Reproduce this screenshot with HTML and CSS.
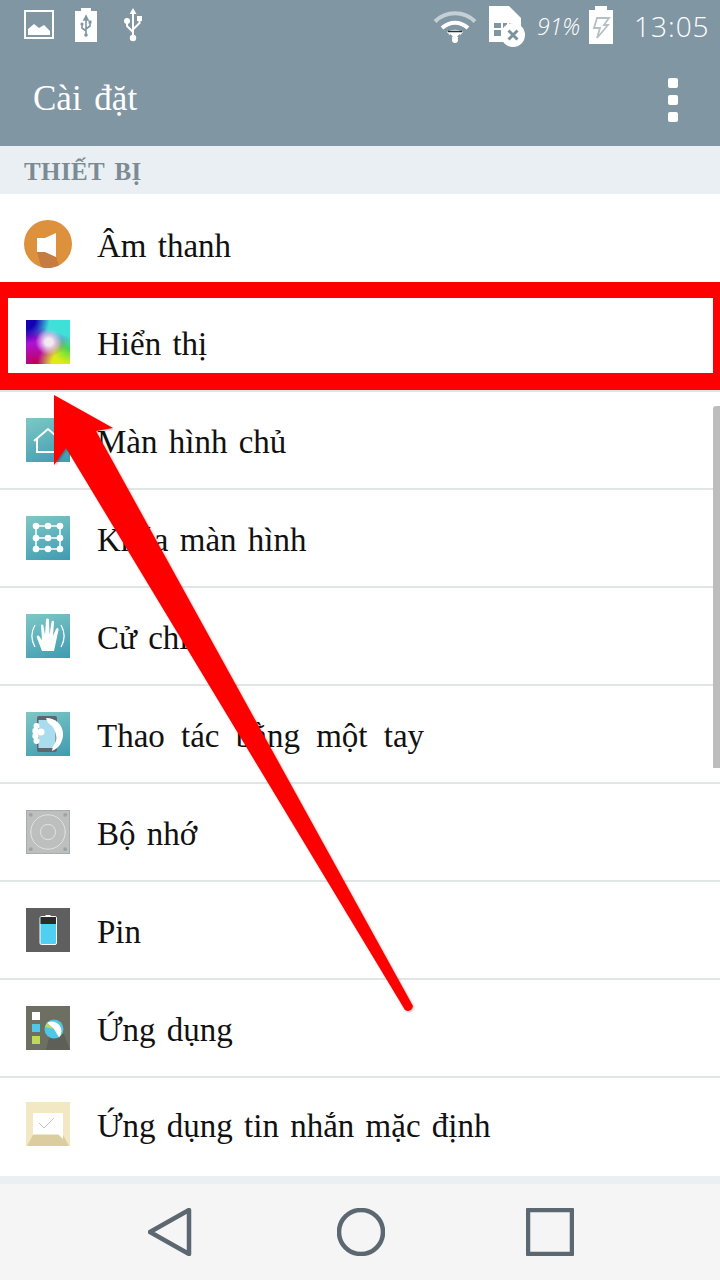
FILE: index.html
```html
<!DOCTYPE html>
<html lang="vi">
<head>
    <meta charset="UTF-8">
    <meta name="viewport" content="width=device-width, initial-scale=1.0">
    <title>Cài đặt</title>
    <link rel="stylesheet" href="styles.css">
</head>
<body>
    <div id="phone">
        <header class="top">
            <div class="status-bar">
                <svg class="st-image" viewBox="0 0 30 30"><rect x="1" y="1" width="28" height="27" fill="none" stroke="#fff" stroke-width="2"/><path d="M4 25v-6l6-5 5 4 5-3 6 6v4z" fill="#fff"/></svg>
                <svg class="st-batt-usb" viewBox="0 0 22 34"><path d="M6 0h10v3h6v31H0V3h6z" fill="#fff"/><path d="M11 10v17M11 8l-2 4h4zM11 23l-4-3v-3M11 21l4-3v-3" fill="none" stroke="#8196a3" stroke-width="1.6"/><circle cx="7" cy="16" r="1.6" fill="#8196a3"/><rect x="13.5" y="12.5" width="3" height="3" fill="#8196a3"/><circle cx="11" cy="27" r="1.8" fill="#8196a3"/></svg>
                <svg class="st-usb" viewBox="0 0 18 34"><path d="M9 0l3.5 6h-7zM8 5h2v25H8z" fill="#fff"/><circle cx="9" cy="30" r="3.2" fill="#fff"/><circle cx="3" cy="13" r="3" fill="#fff"/><rect x="13" y="8" width="5" height="5" fill="#fff"/><path d="M3 14v4l6 6M15.500 12v3l-6 6" fill="none" stroke="#fff" stroke-width="2"/></svg>
                <svg class="st-wifi" viewBox="0 0 44 33"><path d="M2 11.500C13 .5 31 .5 42 11.500" fill="none" stroke="#c4d0d6" stroke-width="4"/><path d="M9 18c8-7 18-7 26 0" fill="none" stroke="#fff" stroke-width="4"/><path d="M14 22c5-3 11-3 16 0l-8 9z" fill="#fff"/><path d="M15 21.500h14" stroke="#263238" stroke-width="1.500"/><path d="M17 24l3 2.500-3 2zM27 24l-3 2.500 3 2z" fill="#8196a3"/><circle cx="22" cy="30" r="3" fill="#fff"/></svg>
                <svg class="st-sim" viewBox="0 0 38 42"><path d="M2 1h20l12 12v24H2z" fill="#fff"/><path d="M7 18h7v5H7zM16 18h4v5h-4zM22 18h4v5h-4zM7 25h7v6H7z" fill="#8196a3"/><circle cx="26" cy="30" r="12" fill="#fff"/><path d="M21.500 25.500l9 9M30.500 25.500l-9 9" stroke="#7d929f" stroke-width="3"/></svg>
                <span class="st-pct">91%</span>
                <svg class="st-batt" viewBox="0 0 24 38"><path d="M6 0h12v4h6v34H0V4h6z" fill="#fff"/><path d="M8 12h12l-5 7h4L8 32l3-10H5z" fill="none" stroke="#b6bfc4" stroke-width="1.800"/></svg>
                <span class="st-time">13:05</span>
            </div>
            <div class="app-bar">
                <h1>Cài đặt</h1>
                <div class="menu-dots"><span></span><span></span><span></span></div>
            </div>
        </header>

        <div class="section-title">THIẾT BỊ</div>

        <ul class="settings">
            <li>
                <svg class="icon-round" viewBox="0 0 48 48"><circle cx="24" cy="24" r="24" fill="#dd913c"/><path d="M13 32h8l11 5 3 8.300A24 24 0 0 1 17 47z" fill="#c67b40"/><path d="M13 18h8l11-5v24l-11-5h-8z" fill="#fff"/></svg>
                <span>Âm thanh</span>
            </li>
            <li>
                <div class="icon tile-display"></div>
                <span>Hiển thị</span>
            </li>
            <li>
                <svg class="icon tile-teal" viewBox="0 0 44 44"><path d="M8 23L22 11l14 12M11 21v13h22V21" fill="none" stroke="#fff" stroke-width="2"/></svg>
                <span>Màn hình chủ</span>
            </li>
            <li>
                <svg class="icon tile-teal" viewBox="0 0 44 44"><path d="M10 10h24M10 22h24M10 33h24M10 10v23M34 10v23" fill="none" stroke="#fff" stroke-width="1.500"/><g fill="#fff"><circle cx="10" cy="10" r="3.300"/><circle cx="22" cy="10" r="3.300"/><circle cx="34" cy="10" r="3.300"/><circle cx="10" cy="22" r="3.300"/><circle cx="22" cy="22" r="3.300"/><circle cx="34" cy="22" r="3.300"/><circle cx="10" cy="33" r="3.300"/><circle cx="22" cy="33" r="3.300"/><circle cx="34" cy="33" r="3.300"/></g></svg>
                <span>Khóa màn hình</span>
            </li>
            <li>
                <svg class="icon tile-teal" viewBox="0 0 44 44"><path d="M9 11c-4 7-4 15 0 22M35 11c4 7 4 15 0 22" fill="none" stroke="#fff" stroke-width="1.300"/><path d="M16 37l-5-13c-1-2 1-3 2-2l3 4-1-14c0-2 2-2 2.500 0L19 21l1-15c0-2 3-2 3 0l.5 15 2-13c.3-2 2.700-1.500 2.500.3L27 22l3-7c1-2 3-1 2.500 1L28 37z" fill="#fff"/></svg>
                <span>Cử chỉ</span>
            </li>
            <li>
                <svg class="icon tile-teal" viewBox="0 0 44 44"><rect x="11" y="4" width="20" height="36" rx="2" fill="#5d666c"/><rect x="12.500" y="8" width="17" height="28" fill="#a9dcec"/><path d="M20 6c10 0 17 7 17 16 0 8-4 14-11 17l1-5c3-3 4-7 3-11-1-6-4-10-8-12z" fill="#fff"/><g fill="#fff"><circle cx="10.500" cy="14" r="3"/><circle cx="9.500" cy="19" r="3.200"/><circle cx="9.500" cy="24" r="3.200"/><circle cx="10.500" cy="29" r="3"/><circle cx="15" cy="20" r="3.500"/></g></svg>
                <span class="long-label">Thao tác bằng một tay</span>
            </li>
            <li>
                <svg class="icon tile-storage" viewBox="0 0 44 44"><circle cx="22" cy="22" r="18" fill="none" stroke="#e2e2e2" stroke-width="1"/><circle cx="22" cy="22" r="8" fill="none" stroke="#e2e2e2" stroke-width="1"/><g fill="#9ca3a6"><circle cx="4" cy="4" r="2"/><circle cx="40" cy="4" r="2"/><circle cx="4" cy="40" r="2"/><circle cx="40" cy="40" r="2"/></g></svg>
                <span>Bộ nhớ</span>
            </li>
            <li>
                <svg class="icon tile-pin" viewBox="0 0 44 44"><rect x="14" y="8.500" width="16.500" height="28" rx="1.500" fill="#4fd0f3" stroke="#fff" stroke-width="1"/><rect x="14.500" y="9" width="15.500" height="7" fill="#2b2b2b"/><rect x="19.500" y="7" width="5" height="2" fill="#fff"/></svg>
                <span>Pin</span>
            </li>
            <li>
                <svg class="icon tile-apps" viewBox="0 0 44 44"><path d="M20 44l4-16h14l6 16z" fill="#5e6058"/><rect x="6" y="6" width="8" height="8" fill="#fff"/><rect x="6" y="18" width="8" height="8" fill="#4fc7e6"/><rect x="6" y="30" width="8" height="8" fill="#bcd95a"/><circle cx="28" cy="23" r="9.500" fill="#4fc7e6"/><path d="M21 17a9.500 9.500 0 0 1 12 14.500L28 23z" fill="#fff"/><path d="M19 21l9 2-7-6z" fill="#bcd95a"/></svg>
                <span>Ứng dụng</span>
            </li>
            <li>
                <svg class="icon tile-msg" viewBox="0 0 44 44"><path d="M7 33l-6 11h42l-6-11z" fill="#dccda0"/><path d="M7 11h30v26l-5-5H7z" fill="#fff"/><path d="M13 21l5 5 10-10" fill="none" stroke="#c4c4c4" stroke-width="1"/></svg>
                <span>Ứng dụng tin nhắn mặc định</span>
            </li>
        </ul>

        <nav class="nav-bar">
            <svg class="nav-icon" viewBox="0 0 48 48"><path d="M2 24L41 2v44z" fill="none" stroke="#5b6871" stroke-width="4.500" stroke-linejoin="round"/></svg>
            <svg class="nav-icon" viewBox="0 0 48 48"><circle cx="24" cy="24" r="22" fill="none" stroke="#5b6871" stroke-width="4.500"/></svg>
            <svg class="nav-icon" viewBox="0 0 48 48"><rect x="2" y="2" width="44" height="44" fill="none" stroke="#5b6871" stroke-width="4.500" stroke-linejoin="round"/></svg>
        </nav>

        <div class="scroll-thumb"></div>
        <div class="red-box"></div>
        <svg class="red-arrow" viewBox="0 0 720 1280"><path d="M54 395L113 428 96 431 413 1006Q411 1013 405 1010L66 448 54 465z" fill="#fe0000"/></svg>
    </div>
</body>
</html>
```

FILE: styles.css
```css
* {
    box-sizing: border-box;
}

body {
    margin: 0;
    background-color: #fff;
    font-family: "Liberation Serif", serif;
}

#phone {
    position: relative;
    width: 720px;
    height: 1280px;
    overflow: hidden;
    display: flex;
    flex-direction: column;
}

.top {
    height: 146px;
    background-color: #8196a3;
    color: #fff;
}

.status-bar {
    position: relative;
    height: 54px;
    display: flex;
    align-items: center;
    padding-left: 24px;
}

.st-image { width: 30px; height: 30px; margin-right: 21px; margin-top: -4px; }
.st-batt-usb { width: 22px; height: 34px; margin-right: 27px; margin-top: -4px; }
.st-usb { width: 18px; height: 34px; margin-right: 291px; margin-top: -4px; }
.st-wifi { width: 44px; height: 33px; margin-right: 12px; margin-top: -1px; }
.st-sim { width: 38px; height: 42px; margin-right: 10px; margin-left: -2px; margin-top: -2px; }

.st-pct {
    width: 50px;
    font-family: "Open Sans", sans-serif;
    font-weight: 300;
    font-style: italic;
    font-size: 23px;
    margin-top: -2px;
    margin-left: 2px;
}

.st-batt { width: 24px; height: 38px; margin-left: 2px; margin-right: 21px; margin-top: -4px; }

.st-time {
    font-family: "Open Sans", sans-serif;
    font-weight: 300;
    font-size: 28px;
    letter-spacing: 1px;
    margin-top: -2px;
}

.app-bar {
    height: 92px;
    display: flex;
    align-items: center;
    justify-content: space-between;
    padding: 0 42px 0 33px;
}

.app-bar h1 {
    margin: 0 0 2px;
    font-family: "Liberation Serif", serif;
    font-weight: 400;
    font-size: 35px;
    word-spacing: 4px;
}

.menu-dots {
    display: flex;
    flex-direction: column;
    gap: 7px;
}

.menu-dots span {
    width: 10px;
    height: 10px;
    border-radius: 2px;
    background-color: #fff;
}

.section-title {
    height: 48px;
    padding-left: 24px;
    background-color: #e9eff3;
    color: #7c8a93;
    font-size: 25px;
    font-weight: 700;
    line-height: 52px;
    letter-spacing: 0.4px;
    word-spacing: 3px;
}

.settings {
    flex: 1;
    margin: 0;
    padding: 2px 0 0;
    list-style: none;
    background-color: #fff;
}

.settings li {
    height: 98px;
    display: flex;
    align-items: center;
    padding-left: 26px;
    border-bottom: 2px solid #e1e5e5;
    color: #111;
    font-size: 33px;
    word-spacing: 3px;
}

.settings li:last-child {
    border-bottom: none;
    height: 94px;
    padding-bottom: 2px;
}

.settings li > span {
    margin-left: 27px;
    margin-top: 4px;
}

.settings li > .long-label {
    word-spacing: 8px;
}

.icon {
    flex: none;
    display: block;
    width: 44px;
    height: 44px;
}

.icon-round {
    flex: none;
    width: 48px;
    height: 48px;
    margin: 0 -2px;
}

.tile-teal {
    background: linear-gradient(160deg, #7ec8c6, #3f9bb0);
}

.tile-display {
    background:
        radial-gradient(ellipse at 52% 50%, #f2eaf0 0, #f2eaf0 12%, rgba(242, 234, 240, 0) 42%),
        radial-gradient(circle at 0 0, #1400b4 0, #1400b4 15%, rgba(20, 0, 180, 0) 38%),
        linear-gradient(200deg, #3fe0d8 0, #3fe0d8 28%, rgba(63, 224, 216, 0) 50%),
        radial-gradient(circle at 100% 60%, #30e050 0, rgba(48, 224, 80, 0) 35%),
        radial-gradient(circle at 85% 100%, #e0ea18 0, #e0ea18 20%, rgba(224, 234, 24, 0) 45%),
        radial-gradient(circle at 20% 100%, #c00050 0, rgba(192, 0, 80, 0) 35%),
        #b010d0;
}

.tile-storage {
    background-color: #bdbfbf;
    border: 1px solid #a9adae;
}

.tile-pin {
    background-color: #5f5f5f;
}

.tile-apps {
    background-color: #6d6f63;
}

.tile-msg {
    background-color: #f2e8c4;
}

.nav-bar {
    height: 104px;
    display: flex;
    padding: 24px 146px 0 148px;
    justify-content: space-between;
    background-color: #f5f5f5;
    border-top: 8px solid #e9eff3;
}

.nav-icon {
    width: 48px;
    height: 48px;
}

.scroll-thumb {
    position: absolute;
    top: 406px;
    right: 0;
    width: 7px;
    height: 362px;
    border-radius: 3px 0 0 0;
    background-color: #bdbdbd;
}

.red-box {
    position: absolute;
    top: 282px;
    left: 0;
    width: 720px;
    height: 108px;
    border-style: solid;
    border-color: #fe0000;
    border-width: 16px 7px 17px 8px;
}

.red-arrow {
    position: absolute;
    top: 0;
    left: 0;
    width: 720px;
    height: 1280px;
    filter: drop-shadow(1px 1px 1px rgba(0, 0, 0, 0.3));
}
```
